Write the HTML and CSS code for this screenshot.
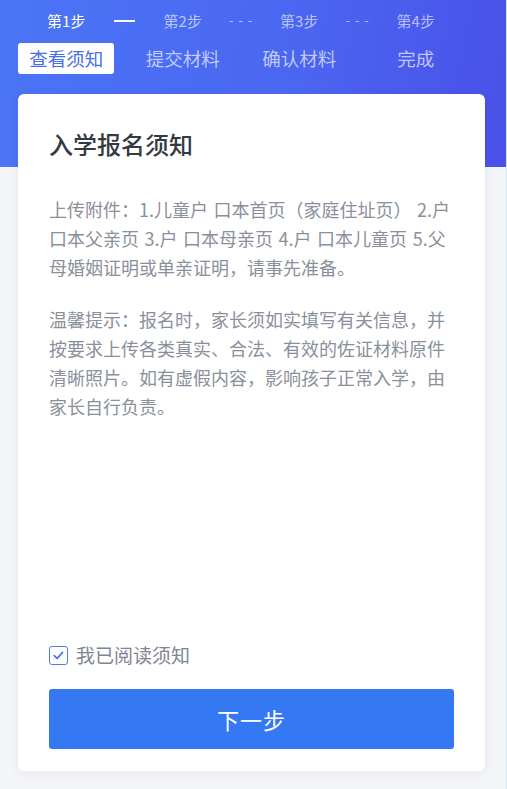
FILE: index.html
```html
<!DOCTYPE html>
<html lang="zh-CN">
<head>
<meta charset="utf-8">
<title>入学报名须知</title>
<link rel="stylesheet" href="styles.css">
</head>
<body>
<div class="page">
  <header class="header">
    <div class="steps">
      <span class="step active">第1步</span>
      <span class="conn solid"></span>
      <span class="step">第2步</span>
      <span class="conn dashed">- - -</span>
      <span class="step">第3步</span>
      <span class="conn dashed">- - -</span>
      <span class="step">第4步</span>
    </div>
    <div class="tabs">
      <div class="tab-cell"><span class="tab current">查看须知</span></div>
      <div class="tab-cell"><span class="tab">提交材料</span></div>
      <div class="tab-cell"><span class="tab">确认材料</span></div>
      <div class="tab-cell"><span class="tab">完成</span></div>
    </div>
  </header>
  <main class="card">
    <h1 class="title">入学报名须知</h1>
    <p class="para">上传附件：1.儿童户 口本首页（家庭住址页） 2.户 口本父亲页 3.户 口本母亲页 4.户 口本儿童页 5.父母婚姻证明或单亲证明，请事先准备。</p>
    <p class="para">温馨提示：报名时，家长须如实填写有关信息，并按要求上传各类真实、合法、有效的佐证材料原件清晰照片。如有虚假内容，影响孩子正常入学，由家长自行负责。</p>
    <div class="spacer"></div>
    <label class="agree">
      <span class="box">
        <svg viewBox="0 0 19 19" width="19" height="19"><path d="M5.2 9.6 L8.2 12.4 L13.6 6.4" fill="none" stroke="#3f74ee" stroke-width="1.6" stroke-linecap="round" stroke-linejoin="round"/></svg>
      </span>
      <span class="agree-text">我已阅读须知</span>
    </label>
    <button class="next">下一步</button>
  </main>
</div>
</body>
</html>
```
FILE: styles.css
```css
* { box-sizing: border-box; }
html, body { margin: 0; padding: 0; }
body {
  font-family: "Noto Sans CJK SC", "Noto Sans", "Liberation Sans", sans-serif;
  background: #f3f5f8;
  width: 507px;
  height: 789px;
  overflow: hidden;
}
.page {
  height: 789px;
  display: flex;
  flex-direction: column;
  border-right: 1px solid #cdeafc;
}
.header {
  height: 167px;
  flex: none;
  background:
    radial-gradient(ellipse 140px 60px at 300px 120px, rgba(255,255,255,0.05), transparent 70%),
    linear-gradient(100deg, #4b75f6 0%, #4a67f1 55%, #4a50e9 100%);
  padding-left: 8px;
}
.steps {
  display: flex;
  height: 40px;
  align-items: center;
}
.step {
  width: 116.5px;
  text-align: center;
  font-size: 15px;
  line-height: 20px;
  color: rgba(255,255,255,0.62);
  margin-top: 1px;
}
.step.active { color: #ffffff; }
.conn {
  width: 24px;
  margin: 0 -12px;
  text-align: center;
  font-size: 13px;
  line-height: 20px;
  color: rgba(255,255,255,0.6);
  letter-spacing: 1px;
  white-space: nowrap;
}
.conn.solid {
  height: 2px;
  background: #ffffff;
  width: 21px;
  margin: 1px -10.5px 0;
}
.tabs {
  display: flex;
  margin-top: 3px;
}
.tab-cell {
  width: 116.5px;
  display: flex;
  justify-content: center;
}
.tab {
  font-size: 18.5px;
  line-height: 31px;
  height: 31px;
  padding: 0 11px;
  color: rgba(255,255,255,0.66);
  border-radius: 3px;
}
.tab.current {
  background: #ffffff;
  color: #4a6de9;
}
.card {
  flex: 1;
  margin: -73px 21px 18px 18px;
  background: #ffffff;
  border-radius: 6px;
  box-shadow: 0 2px 10px rgba(60, 70, 100, 0.08);
  padding: 32px 31px 22px 31px;
  display: flex;
  flex-direction: column;
}
.title {
  margin: 0;
  font-size: 24px;
  line-height: 36px;
  font-weight: 500;
  color: #343a44;
}
.para {
  margin: 33px -7px 0 0;
  font-size: 18px;
  line-height: 28.8px;
  color: #8a909b;
  word-spacing: 1.5px;
}
.para + .para { margin-top: 24px; }
.spacer { flex: 1; }
.agree {
  display: flex;
  align-items: center;
  height: 20px;
  margin-bottom: 24px;
}
.box {
  width: 19px;
  height: 19px;
  border: 1.5px solid #4a7def;
  border-radius: 3px;
  display: flex;
  align-items: center;
  justify-content: center;
  margin-right: 8px;
}
.box svg { display: block; flex: none; }
.agree-text {
  font-size: 19px;
  line-height: 20px;
  color: #7e8591;
}
.next {
  height: 60px;
  width: 100%;
  border: none;
  border-radius: 3px;
  background: #3478f3;
  color: #ffffff;
  font-family: inherit;
  font-size: 22px;
  font-weight: 400;
  letter-spacing: 1px;
  padding: 0;
}
```
